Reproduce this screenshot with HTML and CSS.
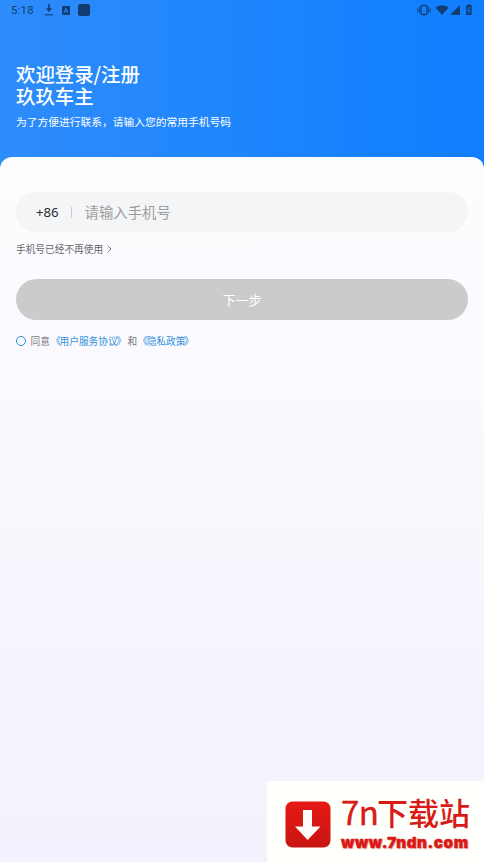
FILE: index.html
```html
<!DOCTYPE html>
<html lang="zh-CN">
<head>
<meta charset="utf-8">
<title>玖玖车主</title>
<link rel="stylesheet" href="styles.css">
</head>
<body>
<div class="screen">
  <header class="hero">
    <div class="status">
      <span class="time">5:18</span>
      <svg class="download" width="10" height="12" viewBox="0 0 10 12"><path d="M5 0V5" fill="none" stroke="currentColor" stroke-width="1.6"/><path d="M1.8 4.2H8.2L5 8Z" fill="currentColor"/><path d="M.7 10.8H9.3" stroke="currentColor" stroke-width="1.1"/></svg>
      <svg class="keyboard" width="8" height="9" viewBox="0 0 8 9"><rect width="8" height="9" rx="1" fill="currentColor"/><path d="M2 6.8L4 2.2L6 6.8M2.8 5.3H5.2" fill="none" stroke="#2685fb" stroke-width=".9"/></svg>
      <span class="app"></span>
      <svg class="system" width="56" height="12" viewBox="0 0 56 12">
        <g fill="none" stroke="currentColor"><rect x="5" y="1.5" width="6" height="9" rx="1" stroke-width="1.3"/><path d="M3.3 3V9M12.7 3V9M1.6 4.5V7.5M14.4 4.5V7.5" stroke-width="1"/></g>
        <path d="M19.5 3.7Q26 -1 32.5 3.7L26 11Z" fill="currentColor"/>
        <path d="M44 1V11H34Z" fill="currentColor"/>
        <path d="M51.2 1H52.2V.2H54.2V1H55.6V11H50.2V1Z" fill="currentColor"/>
        <path d="M53.4 3L51.8 6.4H54L52.6 9" fill="none" stroke="#1681fe" stroke-width=".9"/>
      </svg>
    </div>
    <h1>欢迎登录/注册<br>玖玖车主</h1>
    <p>为了方便进行联系，请输入您的常用手机号码</p>
  </header>
  <main class="sheet">
    <div class="phone">
      <span class="code">+86</span>
      <span class="rule"></span>
      <span class="hint">请输入手机号</span>
    </div>
    <div class="unused">手机号已经不再使用<svg width="5" height="8" viewBox="0 0 5 8"><path d="M.7 .7L4 4L.7 7.3" fill="none" stroke="currentColor" stroke-width=".9"/></svg></div>
    <div class="next">下一步</div>
    <div class="agree"><span class="radio"></span><span>同意<a><i class="open">《</i>用户服务协议<i>》</i></a>和<a><i class="open">《</i>隐私政策<i>》</i></a></span></div>
  </main>
  <aside class="brand">
    <svg width="46" height="47" viewBox="0 0 46 47">
      <defs><linearGradient id="red" x2="0" y2="1"><stop stop-color="#e51914"/><stop offset="1" stop-color="#c91512"/></linearGradient></defs>
      <rect x=".5" y=".5" width="45" height="46" rx="7" fill="url(#red)"/>
      <path d="M18 9H27V25.5H35.5L22.7 39L10 25.5H18Z" fill="#fffefa"/>
    </svg>
    <div class="words"><div class="name"><span>7n</span>下载站</div><div class="url">www.7ndn.com</div></div>
  </aside>
</div>
</body>
</html>
```
FILE: styles.css
```css
* { box-sizing: border-box; }
body { margin: 0; font-family: "Noto Sans CJK SC", sans-serif; }
.screen {
  position: relative;
  width: 484px;
  height: 862px;
  overflow: hidden;
  background: linear-gradient(90deg, #2e8cfb, #0f7eff);
}
.hero { height: 157px; color: #fff; }
.status {
  display: flex;
  align-items: center;
  height: 20px;
  padding: 0 12px 0 11px;
  color: #123e75;
}
.time { width: 33px; font: 11.3px/20px Roboto, sans-serif; letter-spacing: .25px; padding-top: 1px; }
.download { margin-right: 8px; }
.keyboard { margin-right: 8px; }
.app { width: 12px; height: 12px; border-radius: 2px; background: #123d70; }
.system { margin-left: auto; }
h1 {
  margin: 43px 0 0 16px;
  font-size: 19.4px;
  line-height: 22.4px;
  font-weight: 500;
}
.hero p { margin: 5.4px 0 0 16px; font-size: 10.75px; line-height: 18px; }
.sheet {
  height: 705px;
  padding: 35px 16px 0;
  border-radius: 12px 12px 0 0;
  background: linear-gradient(#fdfdff, #f8f8fe 45%, #f3f1fd);
}
.phone {
  display: flex;
  align-items: center;
  height: 40px;
  padding-left: 20px;
  border-radius: 20px;
  background: #f4f5f7;
}
.code { width: 35px; font: 13.2px/40px "Noto Sans", sans-serif; color: #2b2b2d; }
.rule { width: 1px; height: 11px; margin-right: 12.5px; background: #cbcccf; }
.hint { font-size: 14.4px; line-height: 40px; color: #9c9da0; }
.unused {
  display: flex;
  align-items: center;
  gap: 4px;
  height: 14px;
  margin-top: 10px;
  font-size: 9.7px;
  color: #66676b;
}
.next {
  height: 41px;
  margin-top: 23px;
  border-radius: 21px;
  background: #cbcbcb;
  color: #fff;
  font-size: 12.9px;
  line-height: 41px;
  text-align: center;
}
.agree {
  display: flex;
  align-items: center;
  height: 14px;
  margin-top: 14px;
  font-size: 9.7px;
  color: #77787c;
}
.agree a { color: #3591dc; }
.agree i {
  display: inline-block;
  width: 9.7px;
  font-style: normal;
  text-indent: -1.5px;
}
.agree .open { text-indent: 1px; }
.radio { width: 10px; height: 10px; margin-right: 4.5px; border: 1px solid #2f8bd8; border-radius: 50%; }
.brand {
  position: absolute;
  right: 0;
  bottom: 0;
  display: flex;
  width: 217px;
  height: 81px;
  padding: 20px 0 0 18px;
  background: #fffffb;
  color: #d91a17;
}
.words { margin: -10px 0 0 10px; white-space: nowrap; }
.name { height: 42px; font-size: 31px; line-height: 40px; font-weight: 500; }
.name span { display: inline-block; width: 36px; font: 33px/40px "Noto Sans CJK SC", sans-serif; letter-spacing: -.5px; -webkit-text-stroke: .4px #d91a17; }
.url {
  font: 900 15.2px/20px Inter, sans-serif;
  letter-spacing: .6px;
  -webkit-text-stroke: .5px #d91a17;
  text-shadow: 1px 1px 1px #e8b4b0;
}
```
